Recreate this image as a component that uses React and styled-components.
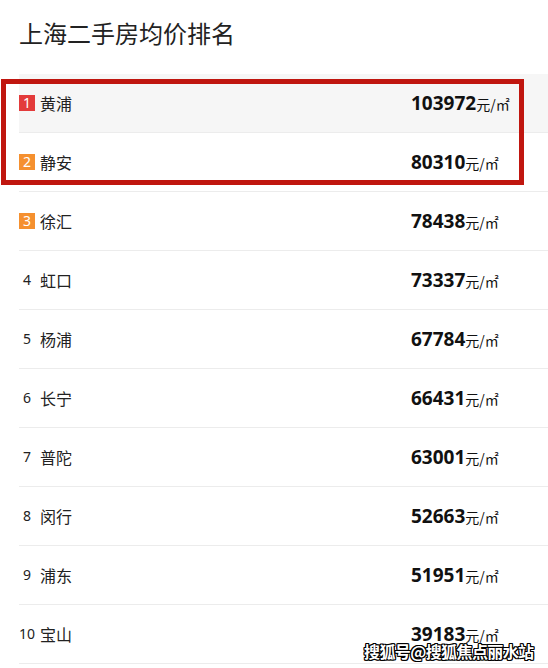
import React from 'react';
import styled, { createGlobalStyle } from 'styled-components';

const GlobalStyle = createGlobalStyle`
    html, body {
        margin: 0;
        padding: 0;
        background: #fff;
        overflow: hidden;
    }
    body {
        font-family: "Noto Sans CJK SC", "Noto Sans", sans-serif;
        color: #222;
    }
`;

const Page = styled.div`
    position: relative;
    width: 548px;
    height: 668px;
    padding-left: 19px;
    box-sizing: border-box;
    overflow: hidden;
`;

const Title = styled.h2`
    margin: 0;
    padding-top: 17px;
    height: 74px;
    box-sizing: border-box;
    font-size: 24px;
    line-height: 32px;
    font-weight: 400;
    color: #222;
`;

const List = styled.div`
    display: flex;
    flex-direction: column;
`;

const Row = styled.div`
    display: grid;
    grid-template-columns: 21px 371px auto;
    align-items: center;
    height: 58px;
    border-bottom: 1px solid #ececec;
    background: ${({ highlight }) => (highlight ? '#f6f6f6' : '#fff')};
`;

const Badge = styled.span`
    display: inline-flex;
    align-items: center;
    justify-content: center;
    width: 16px;
    height: 16px;
    font-family: "Noto Sans", sans-serif;
    font-size: 14px;
    line-height: 16px;
    color: ${({ color }) => (color ? '#fff' : '#222')};
    background: ${({ color }) => color || 'transparent'};
`;

const Name = styled.span`
    font-size: 16px;
    color: #222;
`;

const Price = styled.span`
    white-space: nowrap;
    color: #111;
`;

const Amount = styled.b`
    font-family: "Open Sans", sans-serif;
    font-size: 19px;
    font-weight: 700;
`;

const Unit = styled.span`
    font-size: 14px;
`;

const Marker = styled.div`
    position: absolute;
    left: 1px;
    top: 79px;
    width: 523px;
    height: 106px;
    box-sizing: border-box;
    border: 5px solid #c0160f;
`;

const Watermark = styled.div`
    position: absolute;
    left: 364px;
    top: 641px;
    font-size: 16px;
    line-height: 20px;
    font-weight: 700;
    color: #fff;
    letter-spacing: -0.6px;
    text-shadow: -1px -1px 0 #000, 1px -1px 0 #000, -1px 1px 0 #000, 1px 1px 0 #000, 0 1px 0 #000, 0 -1px 0 #000, 1px 0 0 #000, -1px 0 0 #000;
`;

const rows = [
    { name: '黄浦', price: '103972' },
    { name: '静安', price: '80310' },
    { name: '徐汇', price: '78438' },
    { name: '虹口', price: '73337' },
    { name: '杨浦', price: '67784' },
    { name: '长宁', price: '66431' },
    { name: '普陀', price: '63001' },
    { name: '闵行', price: '52663' },
    { name: '浦东', price: '51951' },
    { name: '宝山', price: '39183' },
];

const badgeColors = ['#e33b3b', '#f5902f', '#f5902f'];

export default function App() {
    return (
        <>
            <GlobalStyle />
            <Page>
                <Title>上海二手房均价排名</Title>
                <List>
                    {rows.map((r, i) => (
                        <Row key={r.name} highlight={i === 0}>
                            <Badge color={badgeColors[i]}>{i + 1}</Badge>
                            <Name>{r.name}</Name>
                            <Price>
                                <Amount>{r.price}</Amount>
                                <Unit>元/㎡</Unit>
                            </Price>
                        </Row>
                    ))}
                </List>
                <Marker />
                <Watermark>搜狐号@搜狐焦点丽水站</Watermark>
            </Page>
        </>
    );
}
